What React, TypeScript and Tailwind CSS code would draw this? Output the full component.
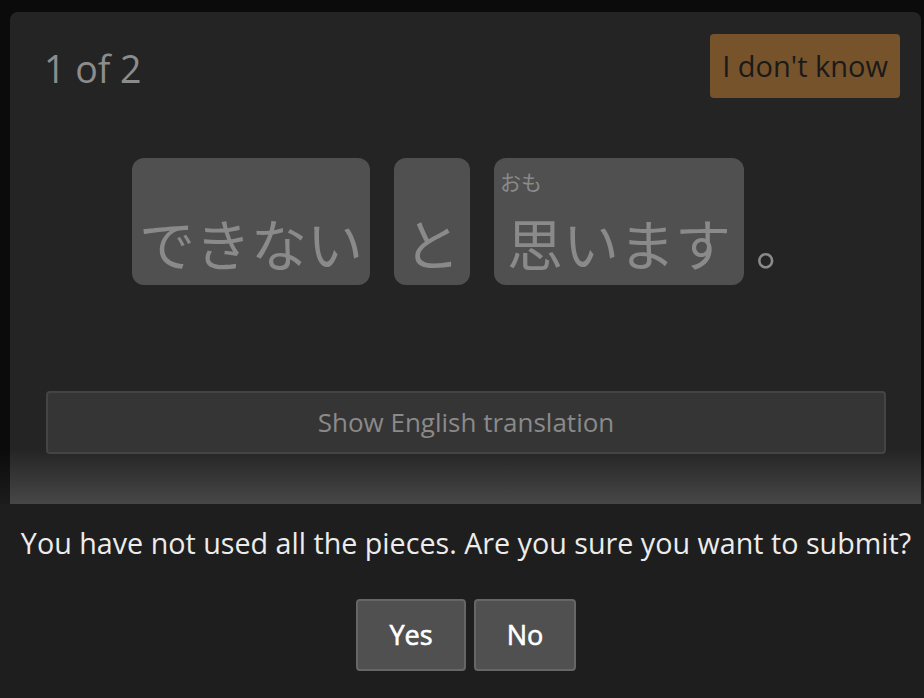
import React from 'react'

const jp = { fontFamily: '"Noto Sans CJK JP", "Noto Sans", sans-serif' }
const os = { fontFamily: '"Open Sans", "Noto Sans", sans-serif' }

function Tile({ text, ruby, width }: { text: string; ruby?: string; width: string }) {
  return (
    <div className={`relative h-[127px] ${width} rounded-[12px] bg-[#505050] flex flex-col justify-end items-center pb-[7px]`}>
      {ruby && (
        <span className="absolute left-[6px] top-[13px] text-[21px] leading-none text-[#8a8a8a]">{ruby}</span>
      )}
      <span className="text-[56px] leading-[72px] text-[#8a8a8a] whitespace-nowrap">{text}</span>
    </div>
  )
}

export default function App() {
  return (
    <div className="h-[698px] w-[924px] flex flex-col overflow-hidden" style={os}>
      <div className="flex-1 flex pt-[12px] pl-[10px] pr-[3px] bg-[linear-gradient(to_bottom,#0b0b0b_calc(100%-55px),#1c1c1c)]">
        <div className="flex-1 flex flex-col rounded-t-[8px] pt-[22px] pl-[36px] pr-[35px] bg-[linear-gradient(to_bottom,#242424_calc(100%-55px),#474747)]">
          <div className="flex items-start justify-between">
            <span className="mt-[17px] -ml-[2px] text-[37.5px] leading-[36px] text-[#8c8c8c]">1 of 2</span>
            <button className="h-[64px] -mr-[14px] px-[12px] rounded-[4px] bg-[#76532b] text-[29px] text-[#1a1a1a]">
              I don't know
            </button>
          </div>

          <div className="mt-[60px] flex items-end justify-center gap-[24px]" style={jp}>
            <Tile text="できない" width="w-[238px]" />
            <Tile text="と" width="w-[76px]" />
            <div className="flex items-end">
              <Tile text="思います" ruby="おも" width="w-[250px]" />
              <span className="w-[56px] pl-[12px] pb-[6px] text-[50px] leading-[72px] text-[#8a8a8a]">。</span>
            </div>
          </div>

          <button className="mt-[106px] h-[63px] w-full rounded-[4px] border-2 border-[#444444] bg-[#353535] text-[26px] text-[#8a8a8a]">
            Show English translation
          </button>
        </div>
      </div>

      <div className="h-[194px] bg-[#1e1e1e] flex flex-col items-center pt-[19px] pl-[8px]">
        <p className="text-[28.7px] leading-[40px] text-[#ececec] whitespace-nowrap">
          You have not used all the pieces. Are you sure you want to submit?
        </p>
        <div className="mt-[36px] flex gap-[8px]">
          <button className="h-[72px] w-[110px] rounded-[4px] border-2 border-[#666666] bg-[#505050] text-[27px] text-white [-webkit-text-stroke:0.6px_white]">
            Yes
          </button>
          <button className="h-[72px] w-[102px] rounded-[4px] border-2 border-[#666666] bg-[#505050] text-[27px] text-white [-webkit-text-stroke:0.6px_white]">
            No
          </button>
        </div>
      </div>
    </div>
  )
}
